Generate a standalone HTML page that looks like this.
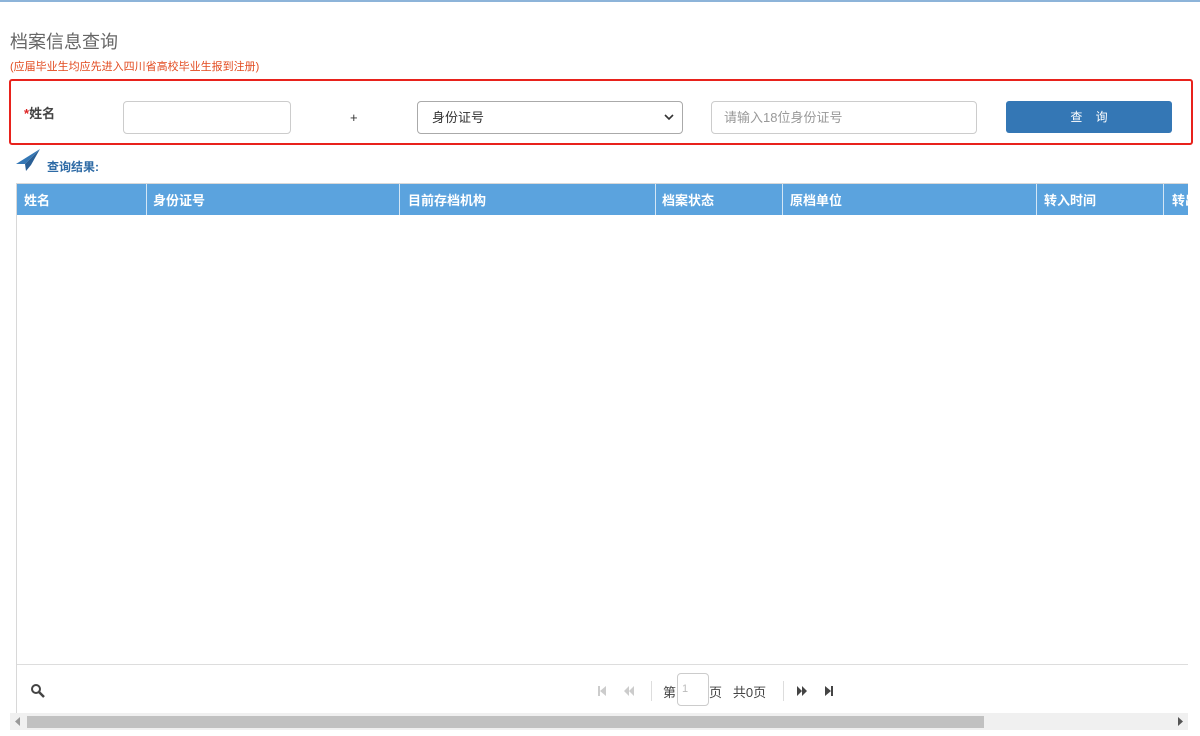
<!DOCTYPE html>
<html><head><meta charset="utf-8"><style>
body{margin:0;width:1200px;height:736px;background:#fff;position:relative;overflow:hidden;font-family:"Liberation Sans","Noto Sans CJK SC",sans-serif;}
.a{position:absolute}
</style></head><body>
<div class="a" style="left:0;top:0;width:1200px;height:2px;background:#8db4d9"></div>
<div class="a" style="left:10px;top:28px;font-size:18px;color:#666">档案信息查询</div>
<div class="a" style="left:10px;top:58px;font-size:11px;color:#e24a1f">(应届毕业生均应先进入四川省高校毕业生报到注册)</div>
<div class="a" style="left:9px;top:79px;width:1180px;height:62px;border:2px solid #e8221c;border-radius:3px"></div>
<div class="a" style="left:24px;top:103px;font-size:13px;color:#444;font-weight:bold"><span style="color:#d22">*</span>姓名</div>
<div class="a" style="left:123px;top:101px;width:166px;height:31px;border:1px solid #ccc;border-radius:4px"></div>
<div class="a" style="left:350px;top:110px;font-size:13px;color:#333">+</div>
<div class="a" style="left:417px;top:101px;width:264px;height:31px;border:1px solid #aaa;border-radius:4px;font-size:13px;color:#333;line-height:31px;text-indent:14px">身份证号
<svg class="a" style="right:8px;top:12px" width="10" height="7" viewBox="0 0 10 7"><path d="M1 1l4 4 4-4" stroke="#333" stroke-width="1.6" fill="none"/></svg></div>
<div class="a" style="left:711px;top:101px;width:264px;height:31px;border:1px solid #ccc;border-radius:4px;font-size:13px;color:#999;line-height:31px;text-indent:12px">请输入18位身份证号</div>
<div class="a" style="left:1006px;top:101px;width:166px;height:32px;background:#3477b5;border-radius:3px;color:#fff;font-size:12px;line-height:32px;text-align:center;word-spacing:10px">查 询</div>
<svg class="a" style="left:16px;top:148px" width="25" height="24" viewBox="0 0 25 24"><path d="M24 1L0 16l9 0z" fill="#3477b5"/><path d="M24 1L9 16l1 7 5-6z" fill="#2a5f95"/></svg>
<div class="a" style="left:47px;top:158px;font-size:12px;color:#2d6aa5;font-weight:bold">查询结果:</div>
<div class="a" style="left:16px;top:183px;width:1171px;height:529px;border:1px solid #d8d8d8;border-right:none;overflow:hidden">
<div class="a" style="left:0;top:0;width:1200px;height:31px;background:#5ba3de;color:#fff;font-size:13px;font-weight:bold;line-height:34px">
<span class="a" style="left:7px">姓名</span><span class="a" style="left:129px;top:0;height:31px;border-left:1px solid #d3e6f5"></span>
<span class="a" style="left:136px">身份证号</span><span class="a" style="left:382px;top:0;height:31px;border-left:1px solid #d3e6f5"></span>
<span class="a" style="left:391px">目前存档机构</span><span class="a" style="left:638px;top:0;height:31px;border-left:1px solid #d3e6f5"></span>
<span class="a" style="left:645px">档案状态</span><span class="a" style="left:765px;top:0;height:31px;border-left:1px solid #d3e6f5"></span>
<span class="a" style="left:773px">原档单位</span><span class="a" style="left:1019px;top:0;height:31px;border-left:1px solid #d3e6f5"></span>
<span class="a" style="left:1027px">转入时间</span><span class="a" style="left:1146px;top:0;height:31px;border-left:1px solid #d3e6f5"></span>
<span class="a" style="left:1155px">转出</span></div>
<div class="a" style="left:0;top:480px;width:1171px;border-top:1px solid #ddd"></div>
</div>
<svg class="a" style="left:30px;top:683px" width="16" height="16" viewBox="0 0 16 16"><circle cx="6" cy="6" r="4" stroke="#444" stroke-width="2" fill="none"/><path d="M9 9l5 5" stroke="#444" stroke-width="2.5"/></svg>
<svg class="a" style="left:597px;top:685px" width="40" height="12" viewBox="0 0 40 12"><path d="M1 1v10h2V1zM3 6l6-5v10z" fill="#ccc"/><path d="M27 6l5-5v10zM32 6l5-5v10z" fill="#ccc"/></svg>
<div class="a" style="left:651px;top:681px;height:20px;border-left:1px solid #ddd"></div>
<div class="a" style="left:663px;top:682px;font-size:13px;color:#444">第</div>
<div class="a" style="left:677px;top:673px;width:30px;height:31px;border:1px solid #ccc;border-radius:4px;font-size:11px;color:#bbb;line-height:31px;text-indent:4px">1</div>
<div class="a" style="left:709px;top:682px;font-size:13px;color:#444">页&nbsp;&nbsp; 共0页</div>
<div class="a" style="left:783px;top:681px;height:20px;border-left:1px solid #ddd"></div>
<svg class="a" style="left:796px;top:685px" width="40" height="12" viewBox="0 0 40 12"><path d="M1 1l5 5-5 5zM6 1l5 5-5 5z" fill="#444"/><path d="M29 1l6 5-6 5zM35 1h2v10h-2z" fill="#444"/></svg>
<div class="a" style="left:10px;top:713px;width:1178px;height:17px;background:#f0f0f0"></div>
<div class="a" style="left:27px;top:716px;width:957px;height:12px;background:#c1c1c1"></div>
<svg class="a" style="left:15px;top:717px" width="6" height="9"><path d="M5 0v9L0 4.5z" fill="#999"/></svg>
<svg class="a" style="left:1178px;top:717px" width="6" height="9"><path d="M0 0v9l5-4.5z" fill="#555"/></svg>
</body></html>
